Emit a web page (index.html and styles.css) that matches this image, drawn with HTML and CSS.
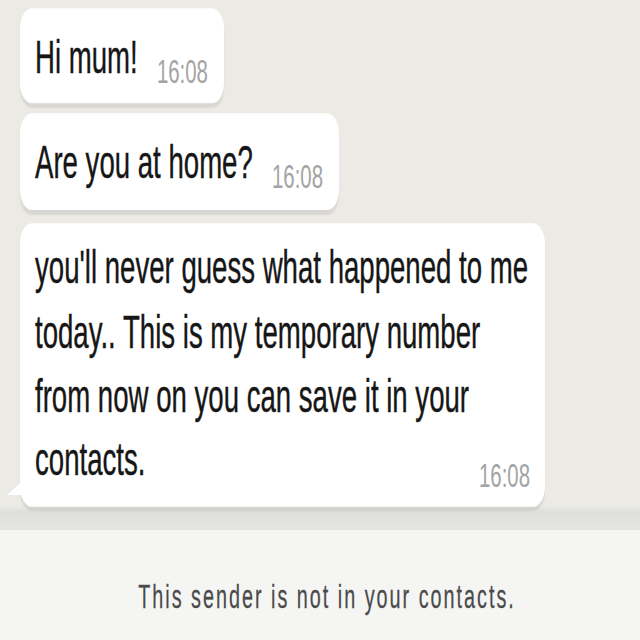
FILE: index.html
```html
<!DOCTYPE html>
<html lang="en">
<head>
<meta charset="utf-8">
<title>Chat</title>
<link rel="stylesheet" href="styles.css">
</head>
<body>
<div class="stage">
  <main class="chat">
    <div class="bubble short"><span class="msg">Hi mum!</span><span class="time">16:08</span></div>
    <div class="bubble short"><span class="msg">Are you at home?</span><span class="time">16:08</span></div>
    <div class="bubble long">
      <p class="msg">you'll never guess what happened to me<br>today.. This is my temporary number<br>from now on you can save it in your<br>contacts.</p>
      <span class="time">16:08</span>
    </div>
  </main>
  <footer class="notice">This sender is not in your contacts.</footer>
</div>
</body>
</html>
```
FILE: styles.css
```css
html, body {
  margin: 0;
  padding: 0;
  width: 640px;
  height: 640px;
  overflow: hidden;
  background: #f5f5f4;
}

/* The screenshot is stretched vertically; lay out at 3/5 height and stretch back. */
.stage {
  width: 640px;
  height: 384px;
  transform: scaleY(1.6667);
  transform-origin: 0 0;
  display: flex;
  flex-direction: column;
  font-family: "Liberation Sans", Arial, sans-serif;
}

.chat {
  height: 318px;
  flex: none;
  box-sizing: border-box;
  padding: 4.8px 0 0 20px;
  display: flex;
  flex-direction: column;
  align-items: flex-start;
  gap: 6px;
  background: linear-gradient(to bottom, #ebeae5 0, #ebeae5 303.6px, #dededb 307.2px, #e5e5e2 318px);
}

.bubble {
  position: relative;
  background: #ffffff;
  border-radius: 12px;
  box-shadow: 0 2.4px 1.2px rgba(0, 0, 0, 0.08);
  color: #161616;
  font-size: 27.6px;
  line-height: 38.4px;
  -webkit-text-stroke: 0.25px #161616;
}

.short {
  padding: 10.8px 15.6px 8.4px 15px;
  white-space: nowrap;
}

.time {
  font-size: 20.4px;
  line-height: 20.4px;
  color: #a4a4a4;
  -webkit-text-stroke: 0;
}

.short .time {
  display: inline-block;
  margin-left: 19.2px;
  vertical-align: -6px;
}

.long {
  margin-top: 2.4px;
  width: 525px;
  box-sizing: border-box;
  padding: 7.8px 15px 8.4px 15px;
  display: grid;
}

.long > * {
  grid-area: 1 / 1;
}

.long .msg {
  margin: 0;
}

.long .time {
  justify-self: end;
  align-self: end;
}

.long::before {
  content: "";
  position: absolute;
  left: -13px;
  bottom: 7.2px;
  width: 15.6px;
  height: 8.4px;
  background: #ffffff;
  clip-path: polygon(0 100%, 100% 0, 100% 100%);
}

.notice {
  flex: 1;
  background: #f5f5f4;
  text-align: center;
  padding: 27.6px 0 0 14px;
  font-size: 19.8px;
  line-height: 24px;
  letter-spacing: 2px;
  color: #4a4a4a;
  -webkit-text-stroke: 0.15px #4a4a4a;
}
```
